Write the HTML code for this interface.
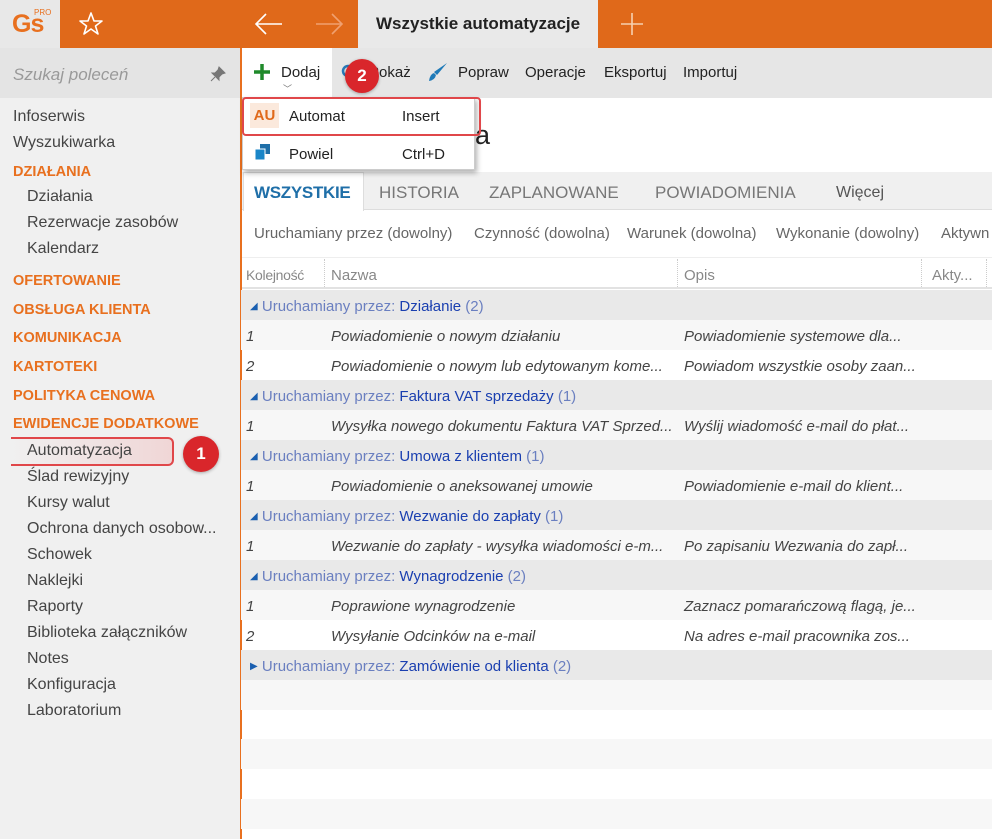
<!DOCTYPE html>
<html><head><meta charset="utf-8"><style>
*{margin:0;padding:0;box-sizing:border-box}
body{width:992px;height:839px;overflow:hidden;font-family:"Liberation Sans","DejaVu Sans",sans-serif;font-size:15px;color:#333;background:#fff;position:relative}
.a{position:absolute;white-space:nowrap}
.or{background:#e0691a}
.side div{position:absolute;left:13px;white-space:nowrap;font-size:16px;color:#444}
.side .h{color:#e8701f;font-weight:bold;font-size:14.5px}
.side .s{left:27px}
.row{position:absolute;left:241px;width:751px;height:30px;font-size:15px}
.row span{position:absolute;top:8px;white-space:nowrap;font-style:italic;color:#444}
.g{background:#e9e9e9}
.g span{font-style:normal;color:#6a7fc0}
.g b{font-weight:normal;color:#1a3fb0}
.g i{font-style:normal;font-size:10px;color:#1a5fb0;vertical-align:2px}
.z{background:#f7f7f7}
</style></head><body>
<div class="a" style="left:0;top:0;width:60px;height:48px;background:#e8e8e8"></div>
<div class="a" style="left:12px;top:10px;font-size:25px;font-weight:bold;color:#e8701f;letter-spacing:-1px">Gs</div>
<div class="a" style="left:34px;top:8px;font-size:8px;color:#e8701f">PRO</div>
<div class="a or" style="left:60px;top:0;width:298px;height:48px"></div>
<svg class="a" style="left:78px;top:11px" width="26" height="26" viewBox="0 0 26 26"><path d="M13 2 L16 10 L24 10 L17.5 15 L20 23 L13 18 L6 23 L8.5 15 L2 10 L10 10 Z" fill="none" stroke="#fff" stroke-width="1.6" stroke-linejoin="round"/></svg>
<svg class="a" style="left:254px;top:12px" width="30" height="24"><path d="M2 12 H28 M12 2 L2 12 L12 22" fill="none" stroke="#fff" stroke-width="1.6"/></svg>
<svg class="a" style="left:314px;top:12px" width="30" height="24"><path d="M2 12 H28 M18 2 L28 12 L18 22" fill="none" stroke="#f0a070" stroke-width="1.6"/></svg>
<div class="a" style="left:358px;top:0;width:240px;height:48px;background:#e9e9e9"></div>
<div class="a" style="left:376px;top:14px;font-size:17px;font-weight:bold;color:#222">Wszystkie automatyzacje</div>
<div class="a or" style="left:598px;top:0;width:394px;height:48px"></div>
<svg class="a" style="left:620px;top:12px" width="24" height="24"><path d="M12 1V23M1 12H23" stroke="#f6d0b0" stroke-width="1.6"/></svg>
<div class="a" style="left:0;top:48px;width:240px;height:791px;background:#f0f0f0"></div>
<div class="a" style="left:0;top:48px;width:240px;height:50px;background:#e4e4e4"></div>
<div class="a" style="left:13px;top:65px;font-size:17px;font-style:italic;color:#999">Szukaj poleceń</div>
<svg class="a" style="left:210px;top:66px" width="16" height="16"><path d="M9 1 L15 7 L12 8 L9 11 L9 14 L2 7 L5 7 L8 4 Z M5 11 L1 15" fill="#777" stroke="#777" stroke-width="1"/></svg>
<div class="a" style="left:240px;top:48px;width:2px;height:791px;background:#e8701f"></div>
<div class="side">
<div style="top:108px">Infoserwis</div>
<div style="top:134px">Wyszukiwarka</div>
<div class="h" style="top:164px">DZIAŁANIA</div>
<div class="s" style="top:188px">Działania</div>
<div class="s" style="top:214px">Rezerwacje zasobów</div>
<div class="s" style="top:240px">Kalendarz</div>
<div class="h" style="top:273px">OFERTOWANIE</div>
<div class="h" style="top:302px">OBSŁUGA KLIENTA</div>
<div class="h" style="top:330px">KOMUNIKACJA</div>
<div class="h" style="top:359px">KARTOTEKI</div>
<div class="h" style="top:388px">POLITYKA CENOWA</div>
<div class="h" style="top:416px">EWIDENCJE DODATKOWE</div>
</div>
<div class="a" style="left:11px;top:437px;width:163px;height:29px;background:linear-gradient(90deg,#f0f0f0,#f0d6d6);border:2px solid #e0474a;border-left:none;border-radius:0 6px 6px 0"></div>
<div class="side">
<div class="s" style="top:442px">Automatyzacja</div>
<div class="s" style="top:468px">Ślad rewizyjny</div>
<div class="s" style="top:494px">Kursy walut</div>
<div class="s" style="top:520px">Ochrona danych osobow...</div>
<div class="s" style="top:546px">Schowek</div>
<div class="s" style="top:572px">Naklejki</div>
<div class="s" style="top:598px">Raporty</div>
<div class="s" style="top:624px">Biblioteka załączników</div>
<div class="s" style="top:650px">Notes</div>
<div class="s" style="top:676px">Konfiguracja</div>
<div class="s" style="top:702px">Laboratorium</div>
</div>
<div class="a" style="left:183px;top:436px;width:36px;height:36px;border-radius:50%;background:#d9262b;color:#fff;font-weight:bold;font-size:17px;text-align:center;line-height:36px;box-shadow:0 1px 3px rgba(0,0,0,.3)">1</div>
<div class="a" style="left:242px;top:48px;width:750px;height:50px;background:#e6e6e6"></div>
<div class="a" style="left:242px;top:48px;width:90px;height:50px;background:#fff"></div>
<svg class="a" style="left:253px;top:63px" width="18" height="18"><path d="M9 1V17M1 9H17" stroke="#1f8a2a" stroke-width="3.5"/></svg>
<div class="a" style="left:281px;top:64px;color:#222">Dodaj</div>
<div class="a" style="left:283px;top:82px;font-size:9px;color:#777">﹀</div>
<svg class="a" style="left:341px;top:64px" width="16" height="16"><circle cx="7" cy="7" r="5" fill="none" stroke="#2a7ab8" stroke-width="2.5"/></svg>
<div class="a" style="left:369px;top:64px;color:#222">Pokaż</div>
<div class="a" style="left:345px;top:59px;width:34px;height:34px;border-radius:50%;background:#d9262b;color:#fff;font-weight:bold;font-size:17px;text-align:center;line-height:34px;box-shadow:0 1px 3px rgba(0,0,0,.3)">2</div>
<svg class="a" style="left:428px;top:62px" width="20" height="20"><path d="M19 1 L9 13 L6 10 Z" fill="#1f7ab8"/><path d="M6 11 Q2 12 1 19 Q7 18 8 13 Z" fill="#1f7ab8"/></svg>
<div class="a" style="left:458px;top:64px;color:#222">Popraw</div>
<div class="a" style="left:525px;top:64px;color:#222">Operacje</div>
<div class="a" style="left:604px;top:64px;color:#222">Eksportuj</div>
<div class="a" style="left:683px;top:64px;color:#222">Importuj</div>
<div class="a" style="left:475px;top:120px;font-size:27px;color:#222">a</div>
<div class="a" style="left:242px;top:172px;width:750px;height:38px;background:#f0f0f0;border-bottom:1px solid #ddd"></div>
<div class="a" style="left:243px;top:172px;width:121px;height:39px;background:#fff;border:1px solid #ddd;border-bottom:none"></div>
<div class="a" style="left:254px;top:183px;font-size:17px;font-weight:bold;color:#1f6fa8;letter-spacing:-0.3px">WSZYSTKIE</div>
<div class="a" style="left:379px;top:183px;font-size:17px;color:#777">HISTORIA</div>
<div class="a" style="left:489px;top:183px;font-size:17px;color:#777">ZAPLANOWANE</div>
<div class="a" style="left:655px;top:183px;font-size:17px;color:#777">POWIADOMIENIA</div>
<div class="a" style="left:836px;top:184px;font-size:16px;color:#555">Więcej</div>
<div class="a" style="left:254px;top:225px;color:#666">Uruchamiany przez (dowolny)</div>
<div class="a" style="left:474px;top:225px;color:#666">Czynność (dowolna)</div>
<div class="a" style="left:627px;top:225px;color:#666">Warunek (dowolna)</div>
<div class="a" style="left:776px;top:225px;color:#666">Wykonanie (dowolny)</div>
<div class="a" style="left:941px;top:225px;color:#666">Aktywn</div>
<div class="a" style="left:242px;top:257px;width:750px;height:32px;border-bottom:2px solid #e2e2e2;border-top:1px solid #eee"></div>
<div class="a" style="left:246px;top:267px;color:#888;font-size:14px;letter-spacing:-0.3px">Kolejność</div>
<div class="a" style="left:324px;top:259px;height:28px;border-left:1px dotted #ccc"></div>
<div class="a" style="left:331px;top:267px;color:#888">Nazwa</div>
<div class="a" style="left:677px;top:259px;height:28px;border-left:1px dotted #ccc"></div>
<div class="a" style="left:684px;top:267px;color:#888">Opis</div>
<div class="a" style="left:921px;top:259px;height:28px;border-left:1px dotted #ccc"></div>
<div class="a" style="left:932px;top:267px;color:#888">Akty...</div>
<div class="a" style="left:986px;top:259px;height:28px;border-left:1px dotted #ccc"></div>
<div class="row g" style="top:290px"><span style="left:9px"><i>◢</i> Uruchamiany przez: <b>Działanie</b> (2)</span></div>
<div class="row z" style="top:320px"><span style="left:5px">1</span><span style="left:90px">Powiadomienie o nowym działaniu</span><span style="left:443px">Powiadomienie systemowe dla...</span></div>
<div class="row" style="top:350px"><span style="left:5px">2</span><span style="left:90px">Powiadomienie o nowym lub edytowanym kome...</span><span style="left:443px">Powiadom wszystkie osoby zaan...</span></div>
<div class="row g" style="top:380px"><span style="left:9px"><i>◢</i> Uruchamiany przez: <b>Faktura VAT sprzedaży</b> (1)</span></div>
<div class="row z" style="top:410px"><span style="left:5px">1</span><span style="left:90px">Wysyłka nowego dokumentu Faktura VAT Sprzed...</span><span style="left:443px">Wyślij wiadomość e-mail do płat...</span></div>
<div class="row g" style="top:440px"><span style="left:9px"><i>◢</i> Uruchamiany przez: <b>Umowa z klientem</b> (1)</span></div>
<div class="row z" style="top:470px"><span style="left:5px">1</span><span style="left:90px">Powiadomienie o aneksowanej umowie</span><span style="left:443px">Powiadomienie e-mail do klient...</span></div>
<div class="row g" style="top:500px"><span style="left:9px"><i>◢</i> Uruchamiany przez: <b>Wezwanie do zapłaty</b> (1)</span></div>
<div class="row z" style="top:530px"><span style="left:5px">1</span><span style="left:90px">Wezwanie do zapłaty - wysyłka wiadomości e-m...</span><span style="left:443px">Po zapisaniu Wezwania do zapł...</span></div>
<div class="row g" style="top:560px"><span style="left:9px"><i>◢</i> Uruchamiany przez: <b>Wynagrodzenie</b> (2)</span></div>
<div class="row z" style="top:590px"><span style="left:5px">1</span><span style="left:90px">Poprawione wynagrodzenie</span><span style="left:443px">Zaznacz pomarańczową flagą, je...</span></div>
<div class="row" style="top:620px"><span style="left:5px">2</span><span style="left:90px">Wysyłanie Odcinków na e-mail</span><span style="left:443px">Na adres e-mail pracownika zos...</span></div>
<div class="row g" style="top:650px"><span style="left:9px"><i>▶</i> Uruchamiany przez: <b>Zamówienie od klienta</b> (2)</span></div>
<div class="row z" style="top:680px"></div>
<div class="row z" style="top:739px"></div>
<div class="row z" style="top:799px"></div>
<div class="a" style="left:242px;top:97px;width:233px;height:73px;background:#fff;border:1px solid #ccc;box-shadow:2px 3px 5px rgba(0,0,0,.3)"></div>
<div class="a" style="left:250px;top:103px;width:29px;height:25px;background:#fbe9dc;color:#e0691a;font-weight:bold;font-size:15px;text-align:center;line-height:25px">AU</div>
<div class="a" style="left:289px;top:108px;color:#222">Automat</div>
<div class="a" style="left:402px;top:108px;color:#222">Insert</div>
<div class="a" style="left:242px;top:97px;width:239px;height:39px;border:2px solid #e0474a;border-radius:4px"></div>
<svg class="a" style="left:254px;top:143px" width="18" height="18"><rect x="6" y="1" width="10" height="10" fill="#1f6fa8"/><rect x="1" y="6" width="10" height="11" fill="#1a86c8" stroke="#fff" stroke-width="1"/></svg>
<div class="a" style="left:289px;top:146px;color:#222">Powiel</div>
<div class="a" style="left:402px;top:146px;color:#222">Ctrl+D</div>
</body></html>
